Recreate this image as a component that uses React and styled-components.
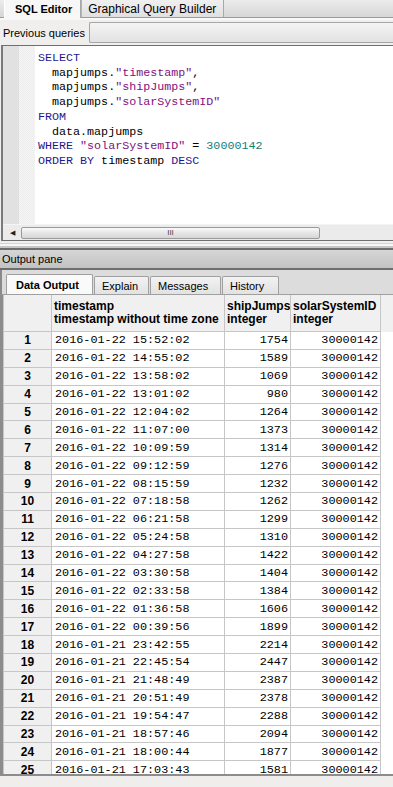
import React from 'react'
import styled, { createGlobalStyle, css } from 'styled-components'

const Global = createGlobalStyle`
    html, body { margin: 0; padding: 0; }
    body {
        width: 393px;
        height: 787px;
        overflow: hidden;
        background: #f0efee;
        font-family: "Liberation Sans", Arial, sans-serif;
        font-size: 11px;
        color: #000;
    }
`

const Window = styled.div`
    display: flex;
    flex-direction: column;
    width: 393px;
    height: 787px;
    overflow: hidden;
`

const TopBar = styled.div`
    display: flex;
    height: 17px;
    padding-left: 4px;
    background: linear-gradient(#ececec, #d6d6d6);
    border-bottom: 1px solid #9c9c9c;
    box-shadow: 0 2px 0 #f8f8f8;
`

const TopTab = styled.div((props) => (`
    display: flex;
    align-items: center;
    padding: 0 ${ props.active ? 8 : 7 }px 0 ${ props.active ? 10 : 6 }px;
    font-size: ${ props.active ? 11 : 12 }px;
    font-weight: ${ props.active ? 'bold' : 'normal' };
    background: ${ props.active ? '#f7f7f7' : 'linear-gradient(#f0f0f0, #e0e0e0)' };
    border-left: 1px solid ${ props.active ? '#ffffff' : '#b4b4b4' };
    border-right: 1px solid #a8a8a8;
    height: ${ props.active ? 18 : 17 }px;
    box-sizing: border-box;
`))

const PrevRow = styled.div`
    display: flex;
    align-items: center;
    height: 25px;
    margin-top: 2px;
    padding-left: 3px;
    gap: 4px;
`

const PrevLabel = styled.span`
    font-size: 11px;
    white-space: nowrap;
`

const Combo = styled.div`
    flex: 1;
    height: 19px;
    background: linear-gradient(#f4f4f4, #e2e2e2);
    border: 1px solid #a6a6a6;
    border-right: none;
    border-radius: 2px 0 0 2px;
`

const Editor = styled.div`
    display: flex;
    flex-direction: column;
    height: 194px;
    margin: 0 0 0 1px;
    border: 1px solid #6f6f6f;
    border-right: none;
    border-left: 2px solid #7a7a7a;
    background: #fff;
`

const EditorBody = styled.div`
    flex: 1;
    display: flex;
    overflow: hidden;
`

const Gutter = styled.div`
    width: 16px;
    background: #e1e1e1;
`

const Fold = styled.div`
    width: 16px;
    background-color: #f6f6f6;
    background-image: linear-gradient(45deg, #ececec 25%, transparent 25%, transparent 75%, #ececec 75%),
        linear-gradient(45deg, #ececec 25%, transparent 25%, transparent 75%, #ececec 75%);
    background-size: 2px 2px;
    background-position: 0 0, 1px 1px;
`

const Code = styled.pre`
    margin: 0;
    padding: 5px 0 0 3px;
    font-family: "Liberation Mono", "Courier New", monospace;
    font-size: 11.7px;
    line-height: 14.7px;
    color: #000;
`

const Kw = styled.span`
    color: #1d1a8f;
`

const Str = styled.span`
    color: #7f117f;
`

const Num = styled.span`
    color: #0f8080;
`

const HScroll = styled.div`
    display: flex;
    align-items: center;
    height: 15px;
    background: #ebebeb;
    border-top: 1px solid #f4f4f4;
`

const Arrow = styled.span`
    width: 18px;
    text-align: center;
    font-size: 7px;
    color: #222;
`

const Thumb = styled.div`
    width: 299px;
    height: 12px;
    box-sizing: border-box;
    border: 1px solid #9a9a9a;
    border-radius: 2px;
    background: linear-gradient(#fafafa, #e6e6e6 50%, #d6d6d6);
    display: flex;
    align-items: center;
    justify-content: center;
    font-size: 8px;
    color: #444;
`

const Splitter = styled.div`
    height: 4px;
    margin-top: 2px;
    border-top: 1px solid #d2d2d2;
    border-bottom: 2px solid #6d6d6d;
    background: #f6f6f6;
    box-shadow: inset 0 -2px 0 #c6c6c6;
`

const PaneTitle = styled.div`
    display: flex;
    align-items: center;
    height: 18px;
    padding-left: 2px;
    font-size: 11px;
    background: linear-gradient(#d6d6d6, #c2c2c2);
    border-bottom: 2px solid #6d6d6d;
`

const OutTabs = styled.div`
    display: flex;
    align-items: flex-end;
    height: 24px;
    padding-left: 4px;
    background: #dcdcdc;
    border-left: 2px solid #8a8a8a;
`

const OutTab = styled.div((props) => (`
    display: flex;
    align-items: center;
    box-sizing: border-box;
    height: ${ props.active ? 20 : 18 }px;
    padding: 0 ${ props.active ? 9 : 7 }px;
    margin-right: 1px;
    font-size: 11px;
    font-weight: ${ props.active ? 'bold' : 'normal' };
    background: ${ props.active ? '#fafafa' : 'linear-gradient(#f2f2f2, #e2e2e2)' };
    border: 1px solid #a0a0a0;
    border-bottom: none;
    border-radius: 2px 2px 0 0;
    width: ${ props.w }px;
`))

const Grid = styled.div`
    flex: 1;
    overflow: hidden;
    background: linear-gradient(#f0f0f0 0 37px, #ffffff 37px);
    border-left: 3px solid #8c8c8c;
    border-top: 1px solid #a0a0a0;
    border-bottom: 2px solid #8c8c8c;
`

const Table = styled.table`
    border-collapse: collapse;
    table-layout: fixed;
    width: 377px;
`

const cell = css`
    border: 1px solid #c6c6c6;
    overflow: hidden;
    white-space: nowrap;
`

const Th = styled.th`
    ${ cell }
    height: 36px;
    background: #f0f0f0;
    text-align: left;
    vertical-align: middle;
    font-size: 12px;
    line-height: 13px;
    font-weight: bold;
    padding: 0 1px 0 2px;
    border-top: none;
`

const Td = styled.td((props) => (`
    height: 16.9px;
    border: 1px solid #c6c6c6;
    padding: 0 ${ props.num ? 2 : 3 }px 0 3px;
    overflow: hidden;
    white-space: nowrap;
    font-family: "Liberation Mono", "Courier New", monospace;
    font-size: 11.8px;
    text-align: ${ props.num ? 'right' : 'left' };
    background: #fff;
`))

const RowNum = styled.td`
    ${ cell }
    height: 16.9px;
    padding: 0;
    background: #f0f0f0;
    text-align: center;
    font-weight: bold;
    font-size: 12px;
`

const Bottom = styled.div`
    height: 11px;
    flex-shrink: 0;
    background: #f0eeec;
`

const rows = [
    [ '2016-01-22 15:52:02', 1754 ],
    [ '2016-01-22 14:55:02', 1589 ],
    [ '2016-01-22 13:58:02', 1069 ],
    [ '2016-01-22 13:01:02', 980 ],
    [ '2016-01-22 12:04:02', 1264 ],
    [ '2016-01-22 11:07:00', 1373 ],
    [ '2016-01-22 10:09:59', 1314 ],
    [ '2016-01-22 09:12:59', 1276 ],
    [ '2016-01-22 08:15:59', 1232 ],
    [ '2016-01-22 07:18:58', 1262 ],
    [ '2016-01-22 06:21:58', 1299 ],
    [ '2016-01-22 05:24:58', 1310 ],
    [ '2016-01-22 04:27:58', 1422 ],
    [ '2016-01-22 03:30:58', 1404 ],
    [ '2016-01-22 02:33:58', 1384 ],
    [ '2016-01-22 01:36:58', 1606 ],
    [ '2016-01-22 00:39:56', 1899 ],
    [ '2016-01-21 23:42:55', 2214 ],
    [ '2016-01-21 22:45:54', 2447 ],
    [ '2016-01-21 21:48:49', 2387 ],
    [ '2016-01-21 20:51:49', 2378 ],
    [ '2016-01-21 19:54:47', 2288 ],
    [ '2016-01-21 18:57:46', 2094 ],
    [ '2016-01-21 18:00:44', 1877 ],
    [ '2016-01-21 17:03:43', 1581 ],
]

function App () {
    return (
        <Window>
            <Global />
            <TopBar>
                <TopTab active>SQL Editor</TopTab>
                <TopTab>Graphical Query Builder</TopTab>
            </TopBar>
            <PrevRow>
                <PrevLabel>Previous queries</PrevLabel>
                <Combo />
            </PrevRow>
            <Editor>
                <EditorBody>
                    <Gutter />
                    <Fold />
                    <Code>
                        <Kw>SELECT</Kw>{'\n'}
                        {'  mapjumps.'}<Str>"timestamp"</Str>{',\n'}
                        {'  mapjumps.'}<Str>"shipJumps"</Str>{',\n'}
                        {'  mapjumps.'}<Str>"solarSystemID"</Str>{'\n'}
                        <Kw>FROM</Kw>{'\n'}
                        {'  data.mapjumps\n'}
                        <Kw>WHERE</Kw> <Str>"solarSystemID"</Str>{' = '}<Num>30000142</Num>{'\n'}
                        <Kw>ORDER BY</Kw>{' timestamp '}<Kw>DESC</Kw>
                    </Code>
                </EditorBody>
                <HScroll>
                    <Arrow>◀</Arrow>
                    <Thumb>III</Thumb>
                </HScroll>
            </Editor>
            <Splitter />
            <PaneTitle>Output pane</PaneTitle>
            <OutTabs>
                <OutTab active w={87}>Data Output</OutTab>
                <OutTab w={55}>Explain</OutTab>
                <OutTab w={71}>Messages</OutTab>
                <OutTab w={57}>History</OutTab>
            </OutTabs>
            <Grid>
                <Table>
                    <colgroup>
                        <col style={{ width: 48 }} />
                        <col style={{ width: 173 }} />
                        <col style={{ width: 66 }} />
                        <col style={{ width: 90 }} />
                    </colgroup>
                    <thead>
                        <tr>
                            <Th />
                            <Th>timestamp<br />timestamp without time zone</Th>
                            <Th>shipJumps<br />integer</Th>
                            <Th>solarSystemID<br />integer</Th>
                        </tr>
                    </thead>
                    <tbody>
                        { rows.map(([ ts, jumps ], i) => (
                            <tr key={ i }>
                                <RowNum>{ i + 1 }</RowNum>
                                <Td>{ ts }</Td>
                                <Td num>{ jumps }</Td>
                                <Td num>30000142</Td>
                            </tr>
                        )) }
                    </tbody>
                </Table>
            </Grid>
            <Bottom />
        </Window>
    )
}

export default App
